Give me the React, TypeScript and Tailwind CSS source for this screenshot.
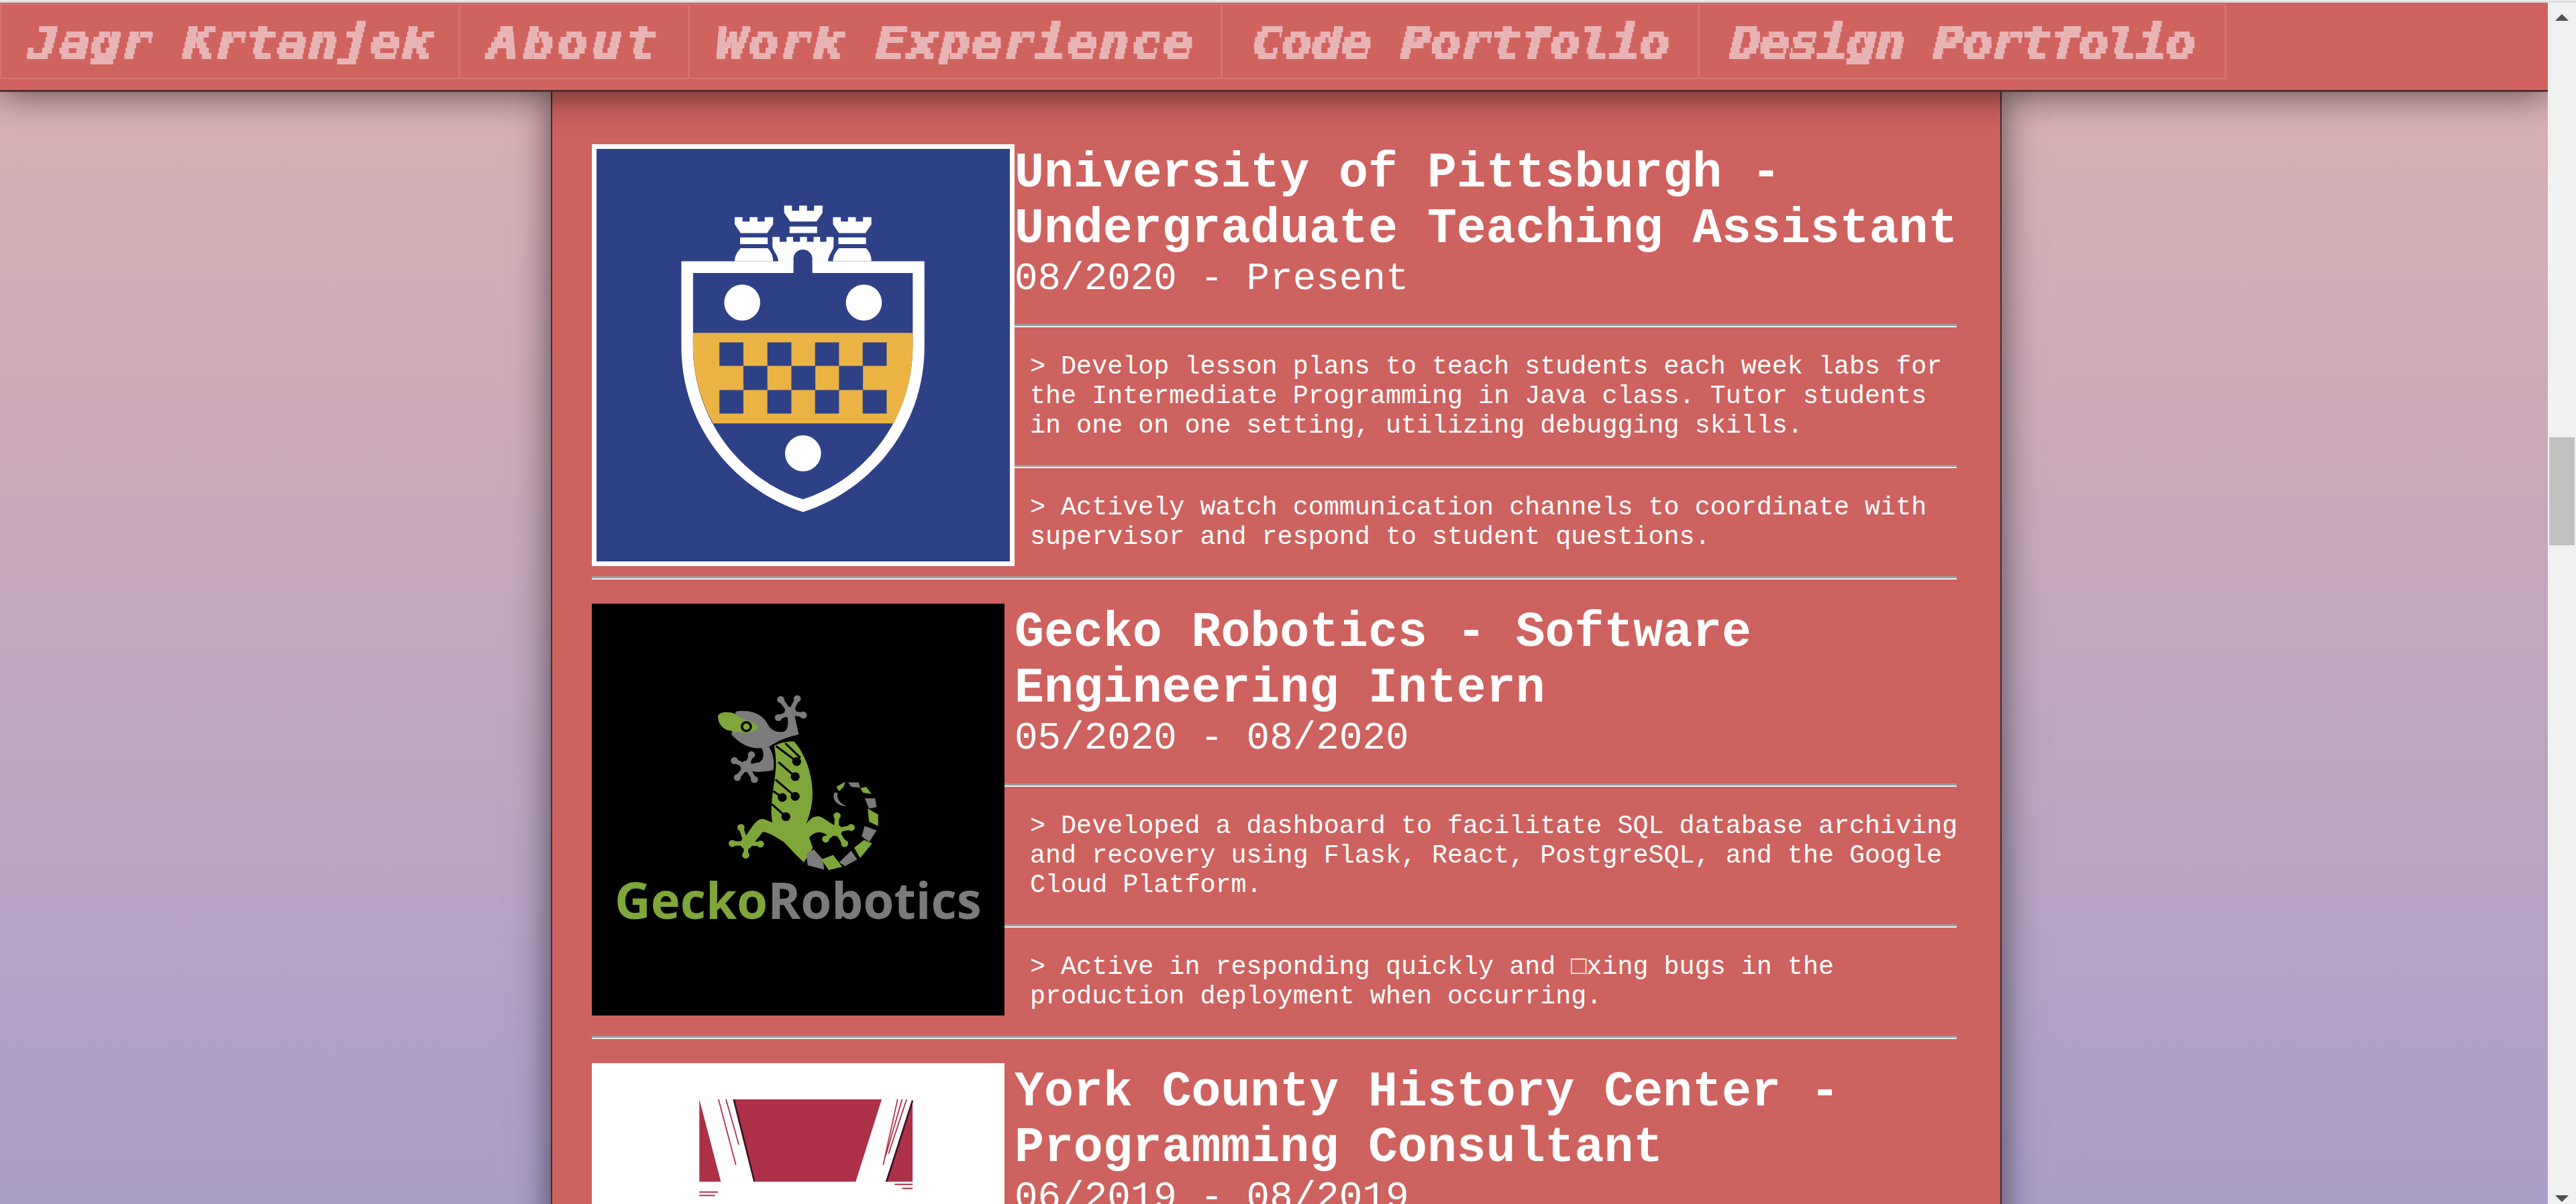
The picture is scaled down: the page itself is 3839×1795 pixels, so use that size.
// Portfolio page, work experience section scrolled part way down.
const NAV = [
  { label: "Jagr Krtanjek", width: "w-[686px] border-l-2", track: "tracking-normal" },
  { label: "About", width: "w-[342px]", track: "tracking-[4px]" },
  { label: "Work Experience", width: "w-[794px]", track: "tracking-[1px]" },
  { label: "Code Portfolio", width: "w-[711px]", track: "tracking-[-1.5px]" },
  { label: "Design Portfolio", width: "w-[785px]", track: "tracking-[-2.5px]" },
];

function Rule() {
  return <div className="h-[5px] border-t-[3px] border-b-2 border-t-[#9c9a9c] border-b-[#eeeeee]" />;
}

// steps the nav lettering into 8px rows, the site uses a pixel font we don't have
function PixelFilter() {
  return (
    <svg className="absolute h-0 w-0" aria-hidden="true">
      <filter id="rows" x="0" y="0" width="100%" height="100%" primitiveUnits="userSpaceOnUse">
        <feFlood x="0" y="3" width="4" height="1" />
        <feComposite width="4" height="8" />
        <feTile result="grid" />
        <feComposite in="SourceGraphic" in2="grid" operator="in" />
        <feMorphology operator="dilate" radius="0 4" />
      </filter>
    </svg>
  );
}

function PittLogo() {
  const checks = [
    [476, 716], [636, 716], [795, 716], [954, 716],
    [556, 797], [716, 797], [875, 797],
    [476, 880], [636, 880], [795, 880], [954, 880],
  ];
  const tower = "M527 437C527 420 535 405 547 392H637C650 405 655 420 655 437ZM545 355H637V378H545ZM527 285H553V300H577V285H603V300H627V285H655V310L635 340H547L527 310Z";
  return (
    <svg viewBox="66 50 1379 1420" preserveAspectRatio="none" className="block h-full w-full">
      <rect x="66" y="50" width="1379" height="1420" fill="#2e4187" />
      <path fill="#fff" d="M349 437H1160V730C1160 1000 990 1220 755 1300C520 1220 349 1000 349 730Z" />
      <path fill="#2e4187" d="M388 477H723V428A31 31 0 0 1 786 428V477H1121V730C1121 980 960 1190 755 1256C550 1190 388 980 388 730Z" />
      <path fill="#ebb343" d="M388 683H1121V730C1121 830 1095 920 1057 995H455C415 920 388 830 388 730Z" />
      {checks.map(([x, y]) => (
        <rect key={`${x}-${y}`} x={x} y={y} width="80" height={y === 797 ? 83 : 81} fill="#2e4187" />
      ))}
      <ellipse cx="552" cy="579" rx="60" ry="62" fill="#fff" />
      <ellipse cx="958" cy="579" rx="60" ry="62" fill="#fff" />
      <ellipse cx="755" cy="1098" rx="60" ry="62" fill="#fff" />
      <path fill="#fff" d={tower} />
      <path fill="#fff" d={tower} transform="translate(328 0)" />
      <path fill="#fff" d="M692 245H718V263H742V245H768V263H792V245H820V270L800 300H712L692 270ZM710 317H802V340H710Z" />
      <path fill="#fff" fillRule="evenodd" d="M653 353H677V370H700V353H722V370H745V353H768V370H790V353H812V370H833V353H857V385C857 400 838 415 838 440H786V428A31 31 0 0 0 723 428V440H673C673 415 653 400 653 385Z" />
    </svg>
  );
}

function Paw({ cx, cy, toes, color }: { cx: number; cy: number; toes: number[][]; color: string }) {
  return (
    <g stroke={color} fill={color}>
      <circle cx={cx} cy={cy} r="20" stroke="none" />
      {toes.map(([x, y]) => (
        <g key={`${x}-${y}`}>
          <line x1={cx} y1={cy} x2={x} y2={y} strokeWidth="15" />
          <circle cx={x} cy={y} r="12" stroke="none" />
        </g>
      ))}
    </g>
  );
}

function GeckoLogo() {
  const green = "#7fa63a";
  const gray = "#7b7b7b";
  const traces = [
    [672, 590, 728, 640], [662, 650, 728, 708], [655, 690, 685, 712], [650, 735, 697, 778],
  ];
  return (
    <svg viewBox="49 45 1378 1417" preserveAspectRatio="none" className="block h-full w-full">
      <rect x="49" y="45" width="1378" height="1417" fill="#000" />
      <path fill={gray} d="M530 416C570 408 612 420 632 452C645 480 662 490 690 485C705 480 705 458 703 432L725 425L740 495C700 505 670 515 640 538C655 560 660 590 655 618C620 625 600 625 575 620L565 600L610 590C625 580 625 555 615 542C580 545 545 530 515 495Z" />
      <Paw cx={712} cy={420} color={gray} toes={[[680, 375], [735, 372], [755, 428], [672, 437]]} />
      <Paw cx={565} cy={605} color={gray} toes={[[525, 585], [582, 565], [535, 643], [592, 650]]} />
      <path fill={green} d="M470 432C475 415 510 415 530 425C545 445 590 445 607 470C590 492 550 492 510 482C490 480 470 460 470 432Z" />
      <circle cx="565" cy="468" r="19" fill="#000" />
      <circle cx="565" cy="468" r="11" fill={green} />
      <path fill={green} d="M658 535C680 522 705 518 725 520C760 560 786 630 786 700C786 740 775 775 765 803C785 775 805 770 825 785L870 815L845 850C820 825 795 825 775 850L787 885L757 935C730 910 705 880 690 865C660 845 635 830 620 830L585 875L560 850C585 810 600 785 620 785C635 790 645 795 652 798C645 760 650 720 655 680C660 640 670 600 658 535Z" />
      {traces.map(([x1, y1, x2, y2]) => (
        <g key={`${x1}-${y1}`}>
          <line x1={x1} y1={y1} x2={x2} y2={y2} stroke="#000" strokeWidth="7" />
          <circle cx={x2} cy={y2} r="15" fill="#000" />
        </g>
      ))}
      <path d="M664 535L733 588M695 525L745 575" stroke="#000" strokeWidth="7" fill="none" />
      <circle cx="733" cy="588" r="15" fill="#000" />
      <Paw cx={865} cy={825} color={green} toes={[[868, 775], [915, 815], [830, 855], [893, 870]]} />
      <Paw cx={565} cy={870} color={green} toes={[[547, 815], [518, 870], [563, 910], [612, 872]]} />
      <g fill={gray}>
        <path d="M765 905L790 890L820 925L825 960L770 945Z" />
        <path d="M875 935L915 895L935 925L895 948Z" />
        <path d="M950 845L960 810L1000 825L975 865Z" />
        <path d="M960 715L995 715L1000 745L975 750Z" />
        <path d="M905 660L940 660L945 678L915 675Z" />
        <path d="M860 695C850 710 860 740 900 742C875 730 865 715 870 695Z" />
      </g>
      <g fill={green}>
        <path d="M815 925L855 910L885 950L840 962Z" />
        <path d="M925 885L958 858L985 870L945 920Z" />
        <path d="M970 750L1005 770L1005 810L975 795Z" />
        <path d="M945 680L965 675L983 700L955 695Z" />
        <path d="M865 675L895 658L890 675L875 690Z" />
      </g>
      <text x="125" y="1130" fontFamily="'Open Sans', sans-serif" fontWeight="700" fontSize="172" textLength="1225" lengthAdjust="spacingAndGlyphs">
        <tspan fill={green}>Gecko</tspan>
        <tspan fill={gray}>Robotics</tspan>
      </text>
    </svg>
  );
}

function YorkLogo() {
  const red = "#ad3049";
  return (
    <svg viewBox="49 135 1378 1842" preserveAspectRatio="none" className="block h-full w-full">
      <rect x="49" y="135" width="1378" height="1842" fill="#fff" />
      <path fill={red} d="M408 297L480 665H408ZM523 297H1017L930 665H592ZM1120 300V665H1030Z" />
      <path stroke="#3a1420" strokeWidth="6" fill="none" d="M523 297L592 665M1120 302L1033 665" />
      <path stroke={red} strokeWidth="4" fill="none" d="M472 297L530 590M497 297L540 500M1070 297L1022 590M1085 297L1030 550M1100 297L1040 540" />
      <path stroke={red} strokeWidth="6" fill="none" d="M408 712H470M408 727H460M1060 677H1120M1085 695H1120" />
    </svg>
  );
}

const JOBS = [
  {
    title: "University of Pittsburgh - Undergraduate Teaching Assistant",
    date: "08/2020 - Present",
    logo: <PittLogo />,
    image: "h-[629px] w-[630px] border-[7px] border-white",
    head: "pl-0",
    body: "pl-[23px]",
    points: [
      "> Develop lesson plans to teach students each week labs for the Intermediate Programming in Java class. Tutor students in one on one setting, utilizing debugging skills.",
      "> Actively watch communication channels to coordinate with supervisor and respond to student questions.",
    ],
  },
  {
    title: "Gecko Robotics - Software Engineering Intern",
    date: "05/2020 - 08/2020",
    logo: <GeckoLogo />,
    image: "h-[614px] w-[615px]",
    head: "pl-[15px]",
    body: "pl-[38px]",
    points: [
      "> Developed a dashboard to facilitate SQL database archiving and recovery using Flask, React, PostgreSQL, and the Google Cloud Platform.",
      "> Active in responding quickly and □xing bugs in the production deployment when occurring.",
    ],
  },
  {
    title: "York County History Center - Programming Consultant",
    date: "06/2019 - 08/2019",
    logo: <YorkLogo />,
    image: "h-[614px] w-[615px]",
    head: "pl-[15px]",
    body: "pl-[38px]",
    points: [],
  },
];

function Job({ job }: { job: (typeof JOBS)[number] }) {
  return (
    <div className="mb-[36px]">
      <div className="flex items-start">
        <div className={`box-border flex-none ${job.image}`}>{job.logo}</div>
        <div className="min-w-0 flex-1 pt-[2px] text-white">
          <h2 className={`-mr-[10px] text-[73.2px] leading-[83px] font-bold ${job.head}`}>{job.title}</h2>
          <p className={`mb-[35px] text-[57.6px] leading-[65px] font-normal ${job.head}`}>{job.date}</p>
          {job.points.map((point) => (
            <div key={point}>
              <Rule />
              <p className={`-mr-[10px] pt-[37px] pb-[36px] text-[38.4px] leading-[44px] ${job.body}`}>{point}</p>
            </div>
          ))}
        </div>
      </div>
      <Rule />
    </div>
  );
}

function Scrollbar() {
  return (
    <div className="flex w-[42px] flex-none flex-col items-center bg-[#f1f1f1]">
      <svg viewBox="0 0 20 10" className="mt-[17px] h-[10px] w-[20px] flex-none fill-[#505050]">
        <path d="M10 0L20 10H0Z" />
      </svg>
      <div className="mt-[621px] h-[161px] w-[38px] flex-none bg-[#c1c1c1]" />
      <svg viewBox="0 0 20 10" className="mt-auto mb-[3px] h-[10px] w-[20px] flex-none fill-[#505050]">
        <path d="M0 0H20L10 10Z" />
      </svg>
    </div>
  );
}

export default function App() {
  return (
    <div className="flex h-[1795px] flex-col overflow-hidden font-['Liberation_Mono',monospace]">
      <PixelFilter />
      <div className="h-1 flex-none border-t border-t-[#f4f4f4] bg-[#dcdcdc]" />
      <div className="flex min-h-0 flex-1">
        <div className="min-w-0 flex-1 overflow-hidden bg-linear-to-b/srgb from-[#dcb1b1] to-[#ab9ec9]">
          <nav className="relative z-10 flex h-[133px] items-start border-b-[3px] border-b-[#54302f] bg-[#d1635f] pt-[2px] shadow-[0_0_55px_rgba(0,0,0,0.66)]">
            {NAV.map((item) => (
              <a
                key={item.label}
                className={`box-border flex h-[112px] flex-none items-center overflow-hidden border-y-2 border-r-[3px] border-white/10 ${item.width}`}
              >
                <span className={`mt-[4px] block h-[80px] w-full scale-x-[1.22] text-center font-['DejaVu_Sans_Mono',monospace] text-[63px] leading-[80px] font-bold whitespace-nowrap text-[#e8b4b3] italic [-webkit-text-stroke:2px_#e8b4b3] [filter:url(#rows)] ${item.track}`}>
                  {item.label}
                </span>
              </a>
            ))}
          </nav>
          <main className="ml-[821px] box-border h-[2000px] w-[2162px] border-x-2 border-x-[#3a3030] bg-[#ce625f] pt-[78px] pr-[65px] pl-[59px] shadow-[0_0_50px_rgba(0,0,0,0.6)]">
            {JOBS.map((job) => (
              <Job key={job.title} job={job} />
            ))}
          </main>
        </div>
        <Scrollbar />
      </div>
    </div>
  );
}
